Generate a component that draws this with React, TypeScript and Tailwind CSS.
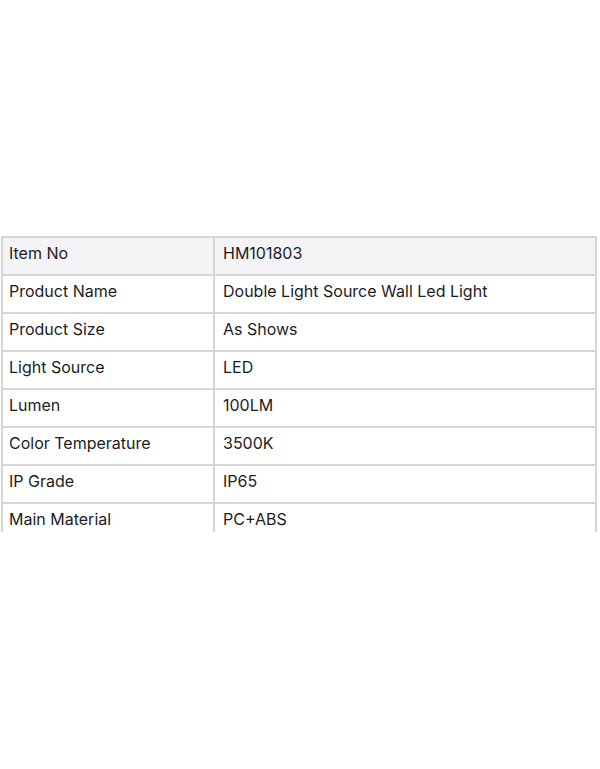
const rows: [string, string][] = [
  ["Item No", "HM101803"],
  ["Product Name", "Double Light Source Wall Led Light"],
  ["Product Size", "As Shows"],
  ["Light Source", "LED"],
  ["Lumen", "100LM"],
  ["Color Temperature", "3500K"],
  ["IP Grade", "IP65"],
  ["Main Material", "PC+ABS"],
];

export default function App() {
  return (
    <div className="h-[769px] w-[600px] bg-white pt-[236px] font-['Inter',sans-serif] text-[16px] text-[#1c1c1e]">
      <div className="ml-[1px] mr-[3px] h-[296px] overflow-hidden border-l-2 border-r-2 border-t-2 border-[#d6d6d6]">
        {rows.map(([label, value], i) => (
          <div
            key={label}
            className={`flex h-[38px] border-b-2 border-[#d6d6d6] ${i === 0 ? "bg-[#f4f4f6]" : "bg-white"}`}
          >
            <div className="flex w-[212px] shrink-0 items-center border-r-2 border-[#d6d6d6] pb-[7px] pl-[6px]">
              {label}
            </div>
            <div className="flex flex-1 items-center pb-[7px] pl-[8px]">{value}</div>
          </div>
        ))}
      </div>
    </div>
  );
}
